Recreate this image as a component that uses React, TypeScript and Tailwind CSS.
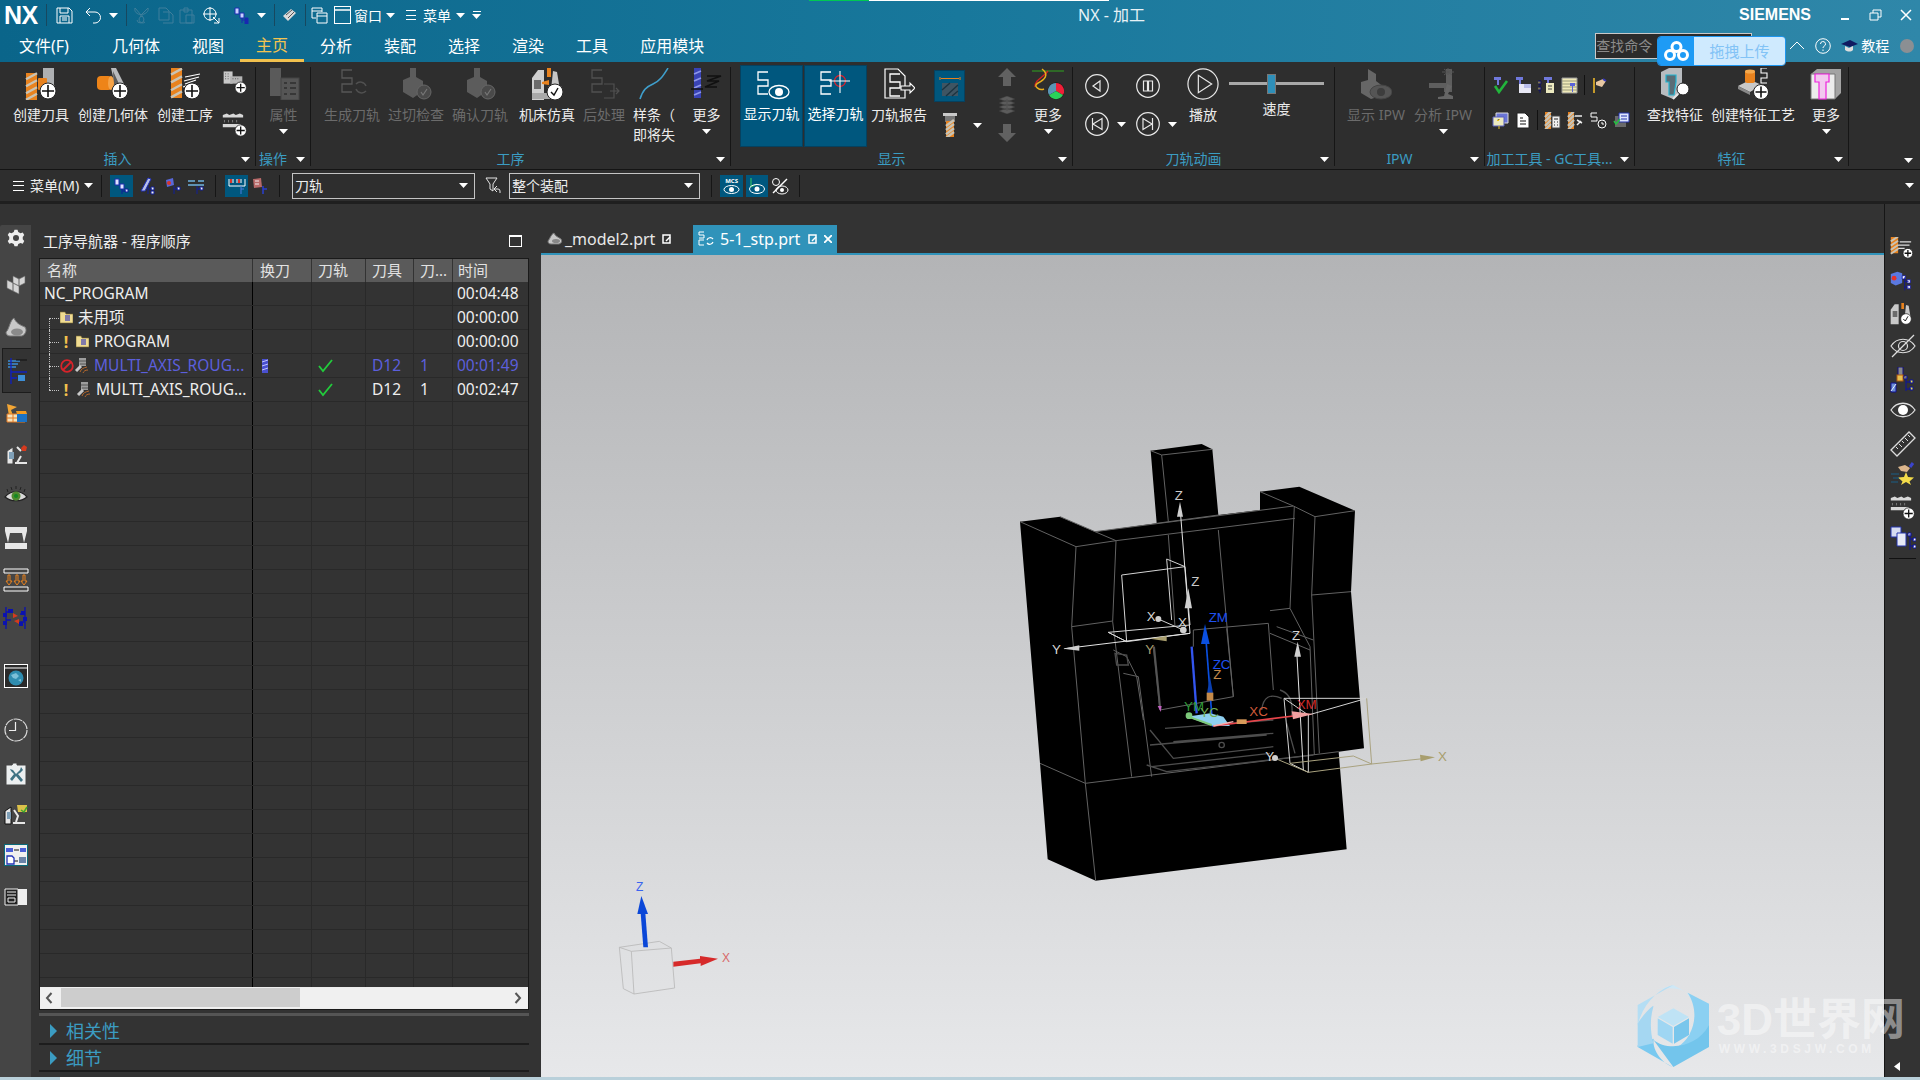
import type { ReactNode } from "react"

type Kids = { children?: ReactNode }

function S({ s = 32, children }: { s?: number } & Kids) {
  return (
    <svg width={s} height={s} viewBox="0 0 32 32" className="block flex-none">
      {children}
    </svg>
  )
}

function Caret({ up = false }: { up?: boolean }) {
  return (
    <svg width="9" height="5" viewBox="0 0 9 5" className={up ? "block flex-none rotate-180" : "block flex-none"}>
      <path d="M0 0h9L4.5 5z" fill="#fff" />
    </svg>
  )
}

function Plus({ x = 23, y = 23, r = 8 }: { x?: number; y?: number; r?: number }) {
  return (
    <g>
      <circle cx={x} cy={y} r={r} fill="#fff" stroke="#222" strokeWidth="1" />
      <path d={`M${x - r + 2} ${y}h${2 * r - 4}M${x} ${y - r + 2}v${2 * r - 4}`} stroke="#111" strokeWidth="1.6" />
    </g>
  )
}

function Bit({ x = 1, y = 5, w = 11, h = 27 }: { x?: number; y?: number; w?: number; h?: number }) {
  const stripes = [0.12, 0.38, 0.64, 0.88]
  return (
    <g>
      <rect x={x} y={y} width={w} height={h} fill="#e8821e" />
      {stripes.map((k) => (
        <path key={k} d={`M${x} ${y + h * k + 3}L${x + w} ${y + h * k - 3}`} stroke="#c9c3b4" strokeWidth="2.4" />
      ))}
    </g>
  )
}

const CreateTool = () => (
  <S>
    <Bit />
    <rect x="18" y="0" width="11" height="20" fill="#aeb0b2" />
    <rect x="13" y="10" width="9" height="12" rx="1" fill="#e8821e" />
    <Plus />
  </S>
)
const CreateGeom = () => (
  <S>
    <path d="M14 0l5 0 9 18-8 8z" fill="#b9babc" />
    <path d="M16 3l7 15-6 4z" fill="#5c5c5c" />
    <rect x="0" y="8" width="15" height="14" rx="4" fill="#ee8418" />
    <ellipse cx="14" cy="15" rx="3" ry="7" fill="#f6a347" />
    <Plus />
  </S>
)
const CreateOp = () => (
  <S>
    <Bit x={2} y={0} w={11} h={30} />
    <path d="M16 9l15-3M15 13l15-4M16 16l11-4M14 19l8-3" stroke="#fff" strokeWidth="1.2" />
    <Plus />
  </S>
)
const SmallDocs = () => (
  <S s={26}>
    <rect x="2" y="3" width="11" height="15" fill="#c9c9c9" />
    <rect x="10" y="9" width="15" height="9" fill="#b5b5b5" />
    <path d="M4 6h1M7 6h1M4 9h1M7 9h1M4 12h1M7 12h1M13 12h1M16 12h1M19 12h1" stroke="#333" strokeWidth="1" />
    <Plus x={23} y={23} r={7} />
  </S>
)
const SmallRule = () => (
  <S s={26}>
    <path d="M1 5l5-2 3 2 5-2 3 2 5-2 4 2v3H1z" fill="#d8d8d8" />
    <path d="M1 16h22v4H1z" fill="#d8d8d8" />
    <path d="M3 11v3M8 11v3M13 11v3M18 11v3" stroke="#888" />
    <Plus x={23} y={24} r={7} />
  </S>
)
const Path = ({ c = "#fff", x = 0, y = 0 }: { c?: string; x?: number; y?: number }) => (
  <path
    d={`M${x + 12} ${y + 1}H${x + 2}V${y + 9}H${x + 12}V${y + 15}H${x + 2}V${y + 23}H${x + 12}`}
    fill="none"
    stroke={c}
    strokeWidth="1.3"
  />
)
const Props = () => (
  <S>
    <rect x="2" y="0" width="11" height="28" fill="#5a5a5a" />
    <rect x="13" y="10" width="18" height="22" fill="#555" stroke="#444" />
    <path d="M16 15h3M22 15h6M16 20h3M22 20h6M16 26h3M22 26h6" stroke="#2e2e2e" strokeWidth="1.4" />
  </S>
)
const GenPath = () => (
  <S>
    <Path c="#575757" x={4} y={1} />
    <path d="M20 16a6 6 0 0 1 10 2M30 23a6 6 0 0 1-10-2" fill="none" stroke="#505050" strokeWidth="1.5" />
  </S>
)
const GougeCheck = () => (
  <S>
    <path d="M3 12l7-3V0h6v9l7 4v10l-10 7-10-6z" fill="#5c5c5c" />
    <circle cx="24" cy="24" r="7" fill="#4a4a4a" stroke="#666" />
    <path d="M21 24l2 3 4-6" fill="none" stroke="#777" strokeWidth="1.2" />
  </S>
)
const Machine = ({ badge = true }: { badge?: boolean }) => (
  <S>
    <path d="M1 10l6-8h6v30H1z" fill="#cfcfcf" />
    <path d="M22 3l4 1 3 18H20z" fill="#c7c7c7" />
    <rect x="3" y="12" width="7" height="9" fill="#6b6b6b" />
    <rect x="16" y="0" width="4" height="9" fill="#e8821e" />
    <path d="M11 14l7-2v5l-7-1z" fill="#e8821e" />
    <rect x="1" y="25" width="20" height="6" fill="#a9a9a9" />
    {badge && (
      <g>
        <circle cx="24" cy="24" r="8" fill="#fff" stroke="#222" />
        <path d="M20 24l3 3 4-7" fill="none" stroke="#111" strokeWidth="1.4" />
      </g>
    )}
  </S>
)
const PostProc = () => (
  <S>
    <Path c="#505050" x={2} y={1} />
    <path d="M16 16h10v14H16M22 23h9M28 20l3 3-3 3" fill="none" stroke="#505050" strokeWidth="1.2" />
  </S>
)
const Spline = () => (
  <S>
    <path d="M2 31c3-9 6-12 13-15S25 8 30 0" fill="none" stroke="#3f9ecb" strokeWidth="1.6" />
  </S>
)
const MoreTool = () => (
  <S>
    <rect x="3" y="0" width="7" height="30" fill="#3943b5" />
    <path d="M3 6l7-3M3 13l7-3M3 20l7-3M3 27l7-3" stroke="#8e97ea" strokeWidth="1.6" />
    <path d="M16 8h14l-14 5h12l-14 6h12M0 21h12" fill="none" stroke="#111" strokeWidth="1.5" />
  </S>
)
const ShowPath = () => (
  <svg width="36" height="32" viewBox="0 0 36 32" className="block flex-none">
    <Path x={2} y={3} />
    <ellipse cx="25" cy="24" rx="10" ry="6.5" fill="none" stroke="#fff" strokeWidth="1.3" />
    <circle cx="25" cy="24" r="4" fill="#fff" />
  </svg>
)
const PickPath = () => (
  <svg width="36" height="32" viewBox="0 0 36 32" className="block flex-none">
    <Path x={1} y={3} />
    <circle cx="22" cy="13" r="5.5" fill="none" stroke="#e0202a" strokeWidth="1.3" />
    <path d="M11 13h21M22 3v22" stroke="#fff" strokeWidth="1.1" />
  </svg>
)
const PathReport = () => (
  <S>
    <path d="M2 1h13l7 7v22H2z" fill="none" stroke="#fff" strokeWidth="1.2" />
    <Path x={5} y={5} />
    <path d="M18 18h9v-3l5 5-5 5v-3h-9z" fill="#2e2e2e" stroke="#fff" strokeWidth="1.1" />
  </S>
)
const ToolSmall = () => (
  <svg width="16" height="24" viewBox="0 0 16 24" className="block">
    <rect x="1" y="0" width="14" height="3" fill="#c9c9c9" />
    <rect x="3" y="3" width="10" height="6" fill="#777" />
    <Bit x={4} y={8} w={8} h={16} />
  </svg>
)
const ClipBox = () => (
  <svg width="24" height="24" viewBox="0 0 24 24" className="block">
    <path d="M2 3v3M22 3v3M3 4.500h18" stroke="#e8821e" strokeWidth="1" />
    <rect x="4" y="9" width="16" height="13" fill="#3f5563" />
    <path d="M4 16l8-7M8 22L20 11M14 22l6-5" stroke="#1d3440" strokeWidth="1.4" />
  </svg>
)
const UpDown = ({ dir }: { dir: "up" | "down" }) => (
  <svg width="18" height="19" viewBox="0 0 18 19" className="block">
    <path d={dir === "up" ? "M9 0l9 9h-5v9H5V9H0z" : "M9 19l9-9h-5V1H5v9H0z"} fill="#616161" />
  </svg>
)
const Layers = () => (
  <svg width="16" height="18" viewBox="0 0 16 18" className="block">
    <path d="M8 0l8 3-8 3-8-3zM8 4l8 3-8 3-8-3zM8 8l8 3-8 3-8-3zM8 12l8 3-8 3-8-3z" fill="#5c5c5c" stroke="#3c3c3c" strokeWidth=".5" />
  </svg>
)
const ColorMore = () => (
  <S>
    <path d="M0 3h32" stroke="#2fa31f" strokeWidth="1" />
    <path d="M3 19c0-8 8-9 13-16" fill="none" stroke="#d32222" strokeWidth="1.3" />
    <path d="M10 1c8 6 2 11-4 14s2 8 6 6" fill="none" stroke="#e8ae1c" strokeWidth="1.5" />
    <circle cx="24" cy="23" r="8.500" fill="#111" />
    <path d="M24 23V15a8 8 0 0 1 7 12z" fill="#ef1f38" />
    <path d="M24 23l7 4a8 8 0 0 1-14 0z" fill="#2ad15a" />
    <path d="M24 23l-7 4a8 8 0 0 1 7-12z" fill="#5a95b5" />
  </S>
)
const Circle = ({ d, size = 24, fill }: { d: string; size?: number; fill?: boolean }) => (
  <svg width={size} height={size} viewBox="0 0 24 24" className="block flex-none">
    <circle cx="12" cy="12" r="11.300" fill="none" stroke="#e8e8e8" strokeWidth={size > 24 ? 0.9 : 1.200} />
    <path d={d} fill={fill ? "#2e2e2e" : "none"} stroke="#e8e8e8" strokeWidth={size > 24 ? 0.9 : 1.200} />
  </svg>
)
const ShowIpw = () => (
  <S>
    <path d="M1 14l7-2V1l8 5v7l8 6v8l-13 4-10-6z" fill="#666" />
    <ellipse cx="21" cy="24" rx="11" ry="7" fill="#555" stroke="#444" />
    <circle cx="21" cy="24" r="4" fill="#3d3d3d" />
  </S>
)
const AnalyzeIpw = () => (
  <S>
    <path d="M2 15h17V1h6v23h-8v-4H2z" fill="#5e5e5e" />
    <path d="M15 4l12 0M21 0v7M17 1l8 6M25 1l-8 6" stroke="#555" />
    <path d="M20 16l5 2-4 8 5 2v3H11v-2l6-1z" fill="#666" />
  </S>
)
const FindFeat = () => (
  <S>
    <path d="M2 4l8-4h13v24l-9 7-12-5z" fill="#b8bcc0" />
    <path d="M7 7h10v7l-2 13h-5V14H7z" fill="#5a6d76" stroke="#22b3d0" strokeWidth="1.2" />
    <circle cx="24" cy="21" r="6" fill="#fff" stroke="#222" />
    <path d="M19 26l-5 5" stroke="#e5e5e5" strokeWidth="2" />
  </S>
)
const CreateFeat = () => (
  <S>
    <path d="M1 18l12-6 12 5-12 7z" fill="#c9c9c9" />
    <path d="M1 18v3l12 6v-3z" fill="#888" />
    <rect x="8" y="2" width="10" height="13" rx="2" fill="#e8821e" />
    <ellipse cx="13" cy="3.500" rx="5" ry="2" fill="#f4a84c" />
    <path d="M30 0h-6v5h6v5h-6v5h6" fill="none" stroke="#fff" strokeWidth="1.1" />
    <Plus x={24} y={24} r={7.500} />
  </S>
)
const MoreFeat = () => (
  <S>
    <path d="M1 6l6-5h24v24l-6 6H1z" fill="#a3a3a3" />
    <path d="M1 6h24v25H1z" fill="#ececec" stroke="#777" />
    <path d="M5 6h14v8h-3v17H9V14H5z" fill="#f2c9ef" stroke="#ee22dd" strokeWidth="1.2" />
  </S>
)
const MiniCheck = () => (
  <svg width="17" height="17" viewBox="0 0 17 17" className="block flex-none">
    <path d="M2 0h7v3H7v5H5V3H2z" fill="#7079dd" />
    <path d="M3 9l4 6 8-11" fill="none" stroke="#22b53c" strokeWidth="2.600" />
  </svg>
)
const MiniDoc = () => (
  <svg width="17" height="17" viewBox="0 0 17 17" className="block flex-none">
    <path d="M1 0h7v3H6v5H4V3H1z" fill="#7079dd" />
    <path d="M4 7h12v9H4z" fill="#e8e8f4" />
    <path d="M9 7h7v4H9z" fill="#b9bdea" />
  </svg>
)
const MiniTree = () => (
  <svg width="17" height="17" viewBox="0 0 17 17" className="block flex-none">
    <path d="M6 0h8v3h-3v5H9V3H6z" fill="#7079dd" />
    <path d="M8 6h8v10H8z" fill="#eceac0" />
    <path d="M10 9h4M10 12h4" stroke="#444" />
    <path d="M2 3v13M0 4h3v3H0zM0 10h3v3H0z" fill="#e8d84a" stroke="#101060" />
  </svg>
)
const MiniNote = () => (
  <svg width="17" height="17" viewBox="0 0 17 17" className="block flex-none">
    <path d="M1 1h15v15H1z" fill="#efe9b8" stroke="#999" />
    <path d="M1 4h15M1 7h15M1 10h15M1 13h15" stroke="#9a9a7a" />
    <path d="M9 6h5v3h-2v6h-1V9H9z" fill="#5a63d8" />
  </svg>
)
const Doc = () => (
  <svg width="16" height="17" viewBox="0 0 16 17" className="block flex-none">
    <path d="M2 1h8l4 4v11H2z" fill="#fff" stroke="#222" />
    <path d="M5 6h3M5 9h6M5 12h6" stroke="#111" />
  </svg>
)

function RibbonBtn({
  w,
  label,
  second,
  icon,
  dim = false,
  caret = false,
}: {
  w: string
  label: string
  second?: string
  icon: ReactNode
  dim?: boolean
  caret?: boolean
}) {
  return (
    <div className={`${w} flex flex-none flex-col items-center pt-[1px]`}>
      <div className="flex h-[32px] items-center justify-center">{icon}</div>
      <div className={`mt-[5px] whitespace-nowrap text-[14px] leading-[20px] ${dim ? "text-[#6b6b6b]" : "text-[#ececec]"}`}>
        {label}
      </div>
      {second && <div className="whitespace-nowrap text-[14px] leading-[20px] text-[#ececec]">{second}</div>}
      {caret && (
        <div className="mt-[4px]">
          <Caret />
        </div>
      )}
    </div>
  )
}

function Group({ w, label, children, last = false }: { w: string; label: string; last?: boolean } & Kids) {
  return (
    <div className={`${w} flex h-[99px] flex-none flex-col ${last ? "" : "border-r border-[#161616]"}`}>
      <div className="flex h-[81px] items-start">{children}</div>
      <div className="flex h-[18px] items-center pt-[4px]">
        <span className="min-w-0 flex-1 overflow-visible whitespace-nowrap text-center text-[14px] leading-[14px] text-[#3b9cc2]">
          {label}
        </span>
        <span className="flex w-[20px] flex-none justify-center">
          <Caret />
        </span>
      </div>
    </div>
  )
}

function Sep({ className = "" }: { className?: string }) {
  return <div className={`h-[22px] w-px flex-none bg-[#17485f] ${className}`} />
}

function QuickAccess() {
  return (
    <div className="flex h-[30px] w-[1078px] flex-none items-center text-white">
      <span className="ml-[4px] w-[37px] font-['Liberation_Sans',sans-serif] text-[25px] leading-none font-bold tracking-[-0.5px]">NX</span>
      <Sep className="ml-[5px]" />
      <svg width="17" height="17" viewBox="0 0 17 17" className="ml-[9px] flex-none">
        <path d="M1 1h12l3 3v12H1zM4 1v5h8V1M4 16v-7h9v7M6 11h5M6 13h5" fill="none" stroke="#fff" />
      </svg>
      <svg width="17" height="17" viewBox="0 0 17 17" className="ml-[12px] flex-none">
        <path d="M5 1L1 5l4 4M1 5h9a5 5 0 0 1 0 11H8" fill="none" stroke="#fff" />
      </svg>
      <span className="ml-[7px]">
        <Caret />
      </span>
      <Sep className="ml-[8px]" />
      <svg width="17" height="17" viewBox="0 0 17 17" className="ml-[6px] flex-none">
        <path d="M8 8L2 1c-1 4 2 6 6 7zM8 8l7-7c1 4-3 6-7 7zM7 9a3.500 3.500 0 1 1-3 4M10 9a3.500 3.500 0 1 0 2 6" fill="none" stroke="#3f7f9c" />
      </svg>
      <svg width="17" height="17" viewBox="0 0 17 17" className="ml-[7px] flex-none">
        <path d="M2 1h7l3 3v9H2zM6 5h7l3 3v8H6" fill="none" stroke="#3f7f9c" />
      </svg>
      <svg width="17" height="17" viewBox="0 0 17 17" className="ml-[5px] flex-none">
        <path d="M1 3h12v13H1zM5 1h4v4H5zM7 8h8v8H7z" fill="none" stroke="#3f7f9c" />
      </svg>
      <svg width="17" height="17" viewBox="0 0 17 17" className="ml-[7px] flex-none">
        <circle cx="7" cy="7" r="6" fill="none" stroke="#fff" />
        <path d="M0 7h14M7 0v14M10 10l6 6M16 11v5h-5" fill="none" stroke="#fff" />
      </svg>
      <svg width="16" height="17" viewBox="0 0 16 17" className="ml-[14px] flex-none">
        <path d="M1 1h4v6H1zM6 6h4v5H6z" fill="#c9d0ff" stroke="#1a2db0" />
        <path d="M8 11v5M8 13h4M11 11h3v3h-3zM11 14h3v3h-3z" fill="#1828b0" stroke="#1828b0" />
      </svg>
      <span className="ml-[7px]">
        <Caret />
      </span>
      <Sep className="ml-[8px]" />
      <svg width="16" height="16" viewBox="0 0 16 16" className="ml-[7px] flex-none">
        <path d="M1 9l8-7 5 4-8 8z" fill="#dadada" />
        <path d="M4 8l6-5M6 11l6-6" stroke="#555" />
      </svg>
      <Sep className="ml-[7px]" />
      <svg width="17" height="17" viewBox="0 0 17 17" className="ml-[5px] flex-none">
        <path d="M1 1h10v4M1 1v10h4M1 4h10M6 6h10v10H6zM6 9h10" fill="none" stroke="#fff" />
      </svg>
      <svg width="17" height="18" viewBox="0 0 17 18" className="ml-[6px] flex-none">
        <rect x=".5" y=".5" width="16" height="17" fill="none" stroke="#fff" />
        <path d="M1 4h15" stroke="#fff" strokeWidth="1.500" />
      </svg>
      <span className="ml-[3px] text-[14px]">窗口</span>
      <span className="ml-[4px]">
        <Caret />
      </span>
      <span className="ml-[11px] flex h-[10px] w-[10px] flex-col justify-between">
        <i className="block h-px bg-white" />
        <i className="block h-px bg-white" />
        <i className="block h-px bg-white" />
      </span>
      <span className="ml-[7px] text-[14px]">菜单</span>
      <span className="ml-[5px]">
        <Caret />
      </span>
      <span className="ml-[7px] flex flex-col items-center gap-[2px]">
        <i className="block h-px w-[8px] bg-white" />
        <Caret />
      </span>
    </div>
  )
}

function TitleBar() {
  const tabs = ["几何体", "视图", "主页", "分析", "装配", "选择", "渲染", "工具", "应用模块"]
  return (
    <header className="relative h-[62px] flex-none bg-gradient-to-r from-[#0a658a] via-[#18789c] to-[#2f87a9] text-white">
      <div className="flex h-[30px] items-center">
        <QuickAccess />
        <span className="text-[16px] text-[#e8f2f6]">NX - 加工</span>
        <span className="ml-[594px] font-['Liberation_Sans',sans-serif] text-[16px] font-bold">SIEMENS</span>
        <i className="mt-[8px] ml-[30px] block h-[2px] w-[8px] bg-white" />
        <svg width="13" height="12" viewBox="0 0 13 12" className="ml-[20px]">
          <path d="M1 4h8v7H1zM4 4V1h8v7H9" fill="none" stroke="#fff" />
        </svg>
        <svg width="12" height="12" viewBox="0 0 12 12" className="ml-[18px]">
          <path d="M1 1l10 10M11 1L1 11" stroke="#fff" strokeWidth="1.500" />
        </svg>
      </div>
      <div className="flex h-[32px] items-center pb-[1px] text-[16px] leading-none">
        <span className="ml-[19px] w-[77px]">文件(F)</span>
        {tabs.map((t) => (
          <span
            key={t}
            className={
              t === "主页"
                ? "-mb-[1px] flex h-[32px] items-center border-b-[3px] border-[#f2c14e] px-[16px] pt-[1px] text-[#f3c451]"
                : "px-[16px]"
            }
          >
            {t}
          </span>
        ))}
        <div className="ml-[875px] flex h-[26px] w-[157px] flex-none items-center border border-[#c9c9c9] bg-[#2b2b2b] text-[14px] text-[#8a8a8a]">
          查找命令
        </div>
        <svg width="16" height="9" viewBox="0 0 16 9" className="ml-[37px] flex-none">
          <path d="M1 8l7-7 7 7" fill="none" stroke="#fff" />
        </svg>
        <svg width="16" height="16" viewBox="0 0 16 16" className="ml-[10px] flex-none">
          <circle cx="8" cy="8" r="7.300" fill="none" stroke="#fff" />
          <path d="M5.500 6a2.500 2.500 0 1 1 3.500 2.300c-.7.400-1 .8-1 1.700M8 11.500v1.500" fill="none" stroke="#fff" />
        </svg>
        <svg width="17" height="12" viewBox="0 0 17 12" className="ml-[10px] flex-none">
          <path d="M0 4l9-4 8 4-8 3z" fill="#101a60" />
          <path d="M4 6v4c3 2 6 2 8 0V6l-4 2z" fill="#ddd" />
        </svg>
        <span className="ml-[3px] text-[14px]">教程</span>
        <i className="ml-[11px] block h-[14px] w-[14px] rounded-full bg-[#8b8f93]" />
      </div>
      {/* baidu upload float, sits on top of the search box */}
      <div className="absolute top-[36px] left-[1657px] z-10 flex h-[30px] w-[129px] overflow-hidden rounded-[4px] border border-[#1e96ef]">
        <div className="flex w-[36px] items-center justify-center bg-[#1e9bf5]">
          <svg width="25" height="20" viewBox="0 0 25 20">
            <g fill="none" stroke="#fff" strokeWidth="3">
              <circle cx="12.500" cy="6" r="4.500" />
              <circle cx="6" cy="14" r="4.500" />
              <circle cx="19" cy="14" r="4.500" />
            </g>
          </svg>
        </div>
        <div className="flex flex-1 items-center justify-center bg-[#cfeafe] text-[15px] text-[#82c3f6]">拖拽上传</div>
      </div>
    </header>
  )
}

function Ribbon() {
  return (
    <section className="flex h-[107px] flex-none items-start bg-[#2e2e2e] pt-[5px]">
      <Group w="w-[256px]" label="插入">
        <div className="w-[5px] flex-none" />
        <RibbonBtn w="w-[72px]" label="创建刀具" icon={<CreateTool />} />
        <RibbonBtn w="w-[72px]" label="创建几何体" icon={<CreateGeom />} />
        <RibbonBtn w="w-[72px]" label="创建工序" icon={<CreateOp />} />
        <div className="flex w-[28px] flex-none flex-col items-center gap-[16px] pt-[2px]">
          <SmallDocs />
          <SmallRule />
        </div>
      </Group>
      <Group w="w-[55px]" label="操作">
        <RibbonBtn w="w-[55px]" label="属性" dim caret icon={<Props />} />
      </Group>
      <Group w="w-[420px]" label="工序">
        <div className="w-[9px] flex-none" />
        <RibbonBtn w="w-[64px]" label="生成刀轨" dim icon={<GenPath />} />
        <RibbonBtn w="w-[64px]" label="过切检查" dim icon={<GougeCheck />} />
        <RibbonBtn w="w-[64px]" label="确认刀轨" dim icon={<GougeCheck />} />
        <RibbonBtn w="w-[70px]" label="机床仿真" icon={<Machine />} />
        <RibbonBtn w="w-[44px]" label="后处理" dim icon={<PostProc />} />
        <RibbonBtn w="w-[56px]" label="样条（" second="即将失" icon={<Spline />} />
        <RibbonBtn w="w-[49px]" label="更多" caret icon={<MoreTool />} />
      </Group>
      <Group w="w-[342px]" label="显示">
        <div className="w-[9px] flex-none" />
        <div className="-mt-[2px] flex h-[82px] w-[63px] flex-none flex-col items-center border border-[#06415f] bg-[#00577e] pt-[2px]">
          <ShowPath />
          <span className="mt-[4px] text-[14px] leading-[20px] whitespace-nowrap text-white">显示刀轨</span>
        </div>
        <div className="-mt-[2px] ml-px flex h-[82px] w-[63px] flex-none flex-col items-center border border-[#06415f] bg-[#00577e] pt-[2px]">
          <PickPath />
          <span className="mt-[4px] text-[14px] leading-[20px] whitespace-nowrap text-white">选择刀轨</span>
        </div>
        <RibbonBtn w="w-[64px]" label="刀轨报告" icon={<PathReport />} />
        <div className="ml-[3px] w-[55px] flex-none pt-[3px]">
          <div className="flex h-[32px] w-[31px] items-center justify-center border border-[#06415f] bg-[#00577e]">
            <ClipBox />
          </div>
          <div className="mt-[11px] flex items-center">
            <span className="flex w-[31px] justify-center">
              <ToolSmall />
            </span>
            <span className="ml-[8px]">
              <Caret />
            </span>
          </div>
        </div>
        <div className="flex w-[36px] flex-none flex-col items-center gap-[9px] pt-[1px]">
          <UpDown dir="up" />
          <Layers />
          <UpDown dir="down" />
        </div>
        <RibbonBtn w="w-[46px]" label="更多" caret icon={<ColorMore />} />
      </Group>
      <Group w="w-[262px]" label="刀轨动画">
        <div className="w-[12px] flex-none" />
        <div className="grid flex-none grid-cols-[51px_51px] gap-y-[14px] pt-[7px]">
          <Circle d="M15 7v10l-7-5z" />
          <Circle d="M7.500 7h4v10h-4zM12.500 7h4v10h-4z" />
          <div className="flex items-center">
            <Circle d="M7.500 6v12M17 6.500v11L8 12z" />
            <span className="ml-[8px]">
              <Caret />
            </span>
          </div>
          <div className="flex items-center">
            <Circle d="M16.500 6v12M7 6.500v11l9-5.500z" />
            <span className="ml-[8px]">
              <Caret />
            </span>
          </div>
        </div>
        <RibbonBtn w="w-[32px]" label="播放" icon={<Circle size={32} d="M8.500 5.500v13l10-6.500z" />} />
        <div className="ml-[10px] flex w-[95px] flex-none flex-col items-center pt-[7px]">
          <div className="relative h-[20px] w-full">
            <div className="absolute top-[8px] h-[3px] w-full bg-[#a8a8a8]" />
            <div className="absolute top-0 left-[38px] h-[20px] w-[9px] border border-[#777] bg-[#2e8fb9]" />
          </div>
          <span className="mt-[5px] text-[14px] leading-[20px] text-[#ececec]">速度</span>
        </div>
      </Group>
      <Group w="w-[150px]" label="IPW">
        <div className="w-[8px] flex-none" />
        <RibbonBtn w="w-[66px]" label="显示 IPW" dim icon={<ShowIpw />} />
        <RibbonBtn w="w-[68px]" label="分析 IPW" dim caret icon={<AnalyzeIpw />} />
      </Group>
      <Group w="w-[150px]" label="加工工具 - GC工具...">
        <div className="flex flex-col gap-[15px] pt-[8px] pl-[7px]">
          <div className="flex items-center gap-[6px]">
            <MiniCheck />
            <MiniDoc />
            <MiniTree />
            <MiniNote />
            <div className="h-[20px] w-px bg-[#111]" />
            <svg width="17" height="17" viewBox="0 0 17 17" className="block">
              <path d="M3 1v15" stroke="#c59a2a" strokeWidth="2" />
              <path d="M5 5l7-3 3 2-4 6-6-2z" fill="#e8c7a2" />
              <path d="M12 2l3 2" stroke="#3438b8" strokeWidth="2" />
            </svg>
          </div>
          <div className="flex items-center gap-[6px]">
            <svg width="17" height="17" viewBox="0 0 17 17" className="block">
              <path d="M4 1h12v10H4z" fill="#6a75d6" stroke="#ddd" />
              <path d="M1 5h11v9H1z" fill="#eceac0" stroke="#5860c0" />
              <path d="M5 8l1 1 2-2M7 14v3" stroke="#e8c020" />
            </svg>
            <Doc />
            <div className="h-[20px] w-px bg-[#111]" />
            <svg width="17" height="17" viewBox="0 0 17 17" className="block">
              <Bit x={1} y={0} w={6} h={17} />
              <rect x="8" y="4" width="8" height="12" fill="#eee" stroke="#444" />
              <path d="M10 7h4M10 10h1M13 10h1M10 13h1M13 13h1" stroke="#222" />
            </svg>
            <svg width="17" height="17" viewBox="0 0 17 17" className="block">
              <Bit x={1} y={0} w={6} h={17} />
              <path d="M8 4h7M10 8l5 3M10 13l4-4" stroke="#eee" strokeWidth="1.500" />
            </svg>
            <svg width="17" height="17" viewBox="0 0 17 17" className="block">
              <path d="M7 1H1v4h6v4H1" fill="none" stroke="#fff" />
              <circle cx="12" cy="12" r="4" fill="none" stroke="#fff" />
              <path d="M12 10v2h2" stroke="#fff" fill="none" />
            </svg>
            <svg width="17" height="17" viewBox="0 0 17 17" className="block">
              <path d="M2 4h11v11H2z" fill="#696969" />
              <path d="M6 1h10v9H6z" fill="#dfe6ff" stroke="#2233aa" />
              <path d="M8 4h6M8 7h6" stroke="#2233aa" />
              <path d="M1 9l2 3 4-5" stroke="#22c040" strokeWidth="1.500" fill="none" />
            </svg>
          </div>
        </div>
      </Group>
      <Group w="w-[214px]" label="特征">
        <div className="w-[5px] flex-none" />
        <RibbonBtn w="w-[70px]" label="查找特征" icon={<FindFeat />} />
        <RibbonBtn w="w-[86px]" label="创建特征工艺" icon={<CreateFeat />} />
        <div className="w-[4px] flex-none" />
        <RibbonBtn w="w-[52px]" label="更多" caret icon={<MoreFeat />} />
      </Group>
      <div className="flex h-[99px] flex-1 items-end justify-end pr-[7px] pb-[3px]">
        <Caret />
      </div>
    </section>
  )
}

function SelBox({ w, text }: { w: string; text: string }) {
  return (
    <div className={`${w} flex h-[26px] flex-none items-center justify-between border border-[#c4c4c4] pr-[6px] pl-[2px] text-[14px] text-[#eee]`}>
      {text}
      <Caret />
    </div>
  )
}

function Toolbar() {
  return (
    <div className="flex h-[31px] flex-none items-center bg-[#2e2e2e] text-[#eee]">
      <span className="ml-[13px] flex h-[10px] w-[11px] flex-col justify-between">
        <i className="block h-px bg-white" />
        <i className="block h-px bg-white" />
        <i className="block h-px bg-white" />
      </span>
      <span className="ml-[6px] text-[14px]">菜单(M)</span>
      <span className="ml-[5px]">
        <Caret />
      </span>
      <div className="ml-[8px] h-[22px] w-px bg-[#161616]" />
      <div className="ml-[8px] flex h-[22px] w-[23px] items-center justify-center bg-[#00577e]">
        <svg width="16" height="16" viewBox="0 0 16 16">
          <path d="M1 1h4v6H1zM6 6h4v5H6z" fill="#dfe3ff" stroke="#1a2db0" />
          <path d="M8 11v5M8 13h4M11 11h3v3h-3z" fill="#dfe3ff" stroke="#101f99" />
        </svg>
      </div>
      <svg width="16" height="18" viewBox="0 0 16 18" className="ml-[6px]">
        <path d="M2 14L9 1l3 1-6 12z" fill="#b6bee8" stroke="#1f2fb8" />
        <path d="M9 9v8M9 12h4M12 10h3v3h-3zM12 14h3v3h-3z" fill="#f0f0f0" stroke="#101f99" />
      </svg>
      <svg width="16" height="18" viewBox="0 0 16 18" className="ml-[10px]">
        <path d="M1 3l7-2 1 7-7 2z" fill="#5968d8" />
        <circle cx="4" cy="6" r="2" fill="#d8352a" />
        <path d="M9 9v8M9 12h4M12 10h3v3h-3z" fill="#f0f0f0" stroke="#101f99" />
      </svg>
      <svg width="16" height="18" viewBox="0 0 16 18" className="ml-[7px]">
        <path d="M0 4h7M10 4h6M0 8h16" stroke="#6fb2e0" strokeWidth="1.500" />
        <path d="M9 9v8M9 12h4M12 10h3v3h-3z" fill="#f0f0f0" stroke="#101f99" />
      </svg>
      <div className="ml-[11px] h-[22px] w-px bg-[#161616]" />
      <div className="ml-[9px] flex h-[22px] w-[23px] items-center justify-center bg-[#00577e]">
        <svg width="18" height="18" viewBox="0 0 18 18">
          <path d="M1 2v7h16V2M5 2v4M9 2v4M13 2v4" fill="none" stroke="#fff" />
          <path d="M2 2h2v4H2zM10 2h2v4h-2z" fill="#d8352a" />
          <path d="M13 9v8M13 12h3" stroke="#4a7fe0" />
        </svg>
      </div>
      <svg width="17" height="18" viewBox="0 0 17 18" className="ml-[4px]">
        <path d="M1 2l8-1 1 9-8 1z" fill="#b86a6a" />
        <path d="M3 4h4M3 7h4" stroke="#eee" />
        <path d="M11 9v8M11 12h4" stroke="#2a3fd0" strokeWidth="1.500" />
      </svg>
      <div className="ml-[10px] h-[22px] w-px bg-[#161616]" />
      <div className="ml-[12px]">
        <SelBox w="w-[183px]" text="刀轨" />
      </div>
      <svg width="16" height="17" viewBox="0 0 16 17" className="ml-[10px]">
        <path d="M1 1h11L8 7v7L5 12V7zM12 9l-3 3 3 3M9 12h4a2 2 0 0 1 2 2v2" fill="none" stroke="#e4e4e4" />
      </svg>
      <div className="ml-[8px]">
        <SelBox w="w-[191px]" text="整个装配" />
      </div>
      <div className="ml-[11px] h-[22px] w-px bg-[#161616]" />
      <div className="ml-[8px] flex h-[22px] w-[23px] flex-col items-center justify-center bg-[#00577e] text-[6px] leading-[7px] font-bold text-white">
        MCS
        <svg width="17" height="9" viewBox="0 0 17 9">
          <ellipse cx="8.500" cy="4.500" rx="7.500" ry="4" fill="none" stroke="#fff" />
          <circle cx="8.500" cy="4.500" r="2.500" fill="#fff" />
        </svg>
      </div>
      <div className="ml-[3px] flex h-[22px] w-[22px] items-center justify-center bg-[#00577e]">
        <svg width="18" height="18" viewBox="0 0 18 18">
          <path d="M3 1v9l6-3" fill="none" stroke="#3ad060" />
          <ellipse cx="9" cy="12" rx="7.500" ry="4.500" fill="none" stroke="#fff" />
          <circle cx="9" cy="12" r="2.500" fill="#fff" />
        </svg>
      </div>
      <svg width="18" height="18" viewBox="0 0 18 18" className="ml-[3px]">
        <path d="M2 16L16 2" stroke="#fff" strokeWidth="1.500" />
        <circle cx="5" cy="5" r="3.500" fill="none" stroke="#fff" />
        <ellipse cx="11" cy="13" rx="6" ry="4" fill="none" stroke="#fff" />
        <circle cx="11" cy="13" r="2" fill="#fff" />
      </svg>
      <div className="ml-[10px] h-[22px] w-px bg-[#161616]" />
      <div className="ml-auto pr-[6px]">
        <Caret />
      </div>
    </div>
  )
}

const railIcons: { mt: string; node: ReactNode }[] = [
  {
    mt: "mt-[26px]",
    node: (
      <svg width="24" height="24" viewBox="0 0 24 24">
        <path d="M3 7l6 3v8l-6-3zM9 3l6 3v7l-6-3zM15 6l6-3v7l-6 3zM9 10l6 3v8l-6-3z" fill="#d5d5d5" stroke="#666" strokeWidth=".6" />
      </svg>
    ),
  },
  {
    mt: "mt-[19px]",
    node: (
      <svg width="24" height="24" viewBox="0 0 24 24">
        <path d="M2 16c3-2 4-12 8-14 2 5 6 7 11 9 2 3 1 7-3 9H6c-3 0-4-2-4-4z" fill="#c8c8c8" stroke="#777" />
        <ellipse cx="13" cy="16" rx="6" ry="3.500" fill="#8a8a8a" />
      </svg>
    ),
  },
]

const rail2: { mt: string; node: ReactNode }[] = [
  {
    mt: "mt-[8px]",
    node: (
      <svg width="24" height="24" viewBox="0 0 24 24">
        <path d="M3 3l10 3-6 3 4 11-5 1z" fill="#f3a635" />
        <path d="M3 13h18v8H3zM3 17h18M9 13v8M15 13v8" fill="#f3e2bd" stroke="#e47b24" />
        <path d="M13 12h10v9H13z" fill="#1b72c4" />
        <path d="M12 10h10l1 3H13z" fill="#f29a1e" />
      </svg>
    ),
  },
  {
    mt: "mt-[18px]",
    node: (
      <svg width="24" height="24" viewBox="0 0 24 24">
        <path d="M3 8l6-4v17H3z" fill="#e7e7e7" stroke="#444" />
        <rect x="5" y="9" width="5" height="7" fill="#7fa0b8" />
        <path d="M13 4l4 4M11 20h12M17 13l-4 7" stroke="#e7e7e7" strokeWidth="2" />
        <path d="M17 5l3-3 3 2-1 4h-4z" fill="#d63a1e" />
      </svg>
    ),
  },
  {
    mt: "mt-[16px]",
    node: (
      <svg width="24" height="20" viewBox="0 0 24 20">
        <path d="M1 12c6-7 16-7 22 0-6 5-16 5-22 0z" fill="#d8d8d8" stroke="#222" strokeWidth="1.200" />
        <circle cx="12" cy="11" r="4.500" fill="#4e8a2e" />
        <circle cx="12" cy="11" r="2" fill="#182" />
        <path d="M4 7L3 4M8 5L7 2M12 4V1M16 5l1-3M20 7l1-3" stroke="#222" />
      </svg>
    ),
  },
  {
    mt: "mt-[19px]",
    node: (
      <svg width="24" height="24" viewBox="0 0 24 24">
        <path d="M1 1h22v4l-3 12h3v6H1v-6h3L1 5z" fill="#e7e7e7" />
        <path d="M6 7h12l2 10H4z" fill="#4b4b4b" />
      </svg>
    ),
  },
  {
    mt: "mt-[18px]",
    node: (
      <svg width="26" height="24" viewBox="0 0 26 24">
        <path d="M1 1h24v4H1zM1 19h24v4H1z" fill="#444" stroke="#fff" />
        <path d="M5 7v6H3l3 4 3-4H7V7zM13 7v6h-2l3 4 3-4h-2V7zM20 7v6h-2l3 4 3-4h-2V7z" fill="none" stroke="#e8821e" />
      </svg>
    ),
  },
  {
    mt: "mt-[14px]",
    node: (
      <svg width="26" height="24" viewBox="0 0 26 24">
        <path d="M3 1v22M3 6h5M3 14h5M22 1v22M22 8h-5M22 16h-5" stroke="#0b12b0" strokeWidth="1.300" />
        <path d="M5 3h5v4H5zM0 7h4v4H0zM0 15h4v4H0zM18 5h4v4h-4zM20 11h4v4h-4zM16 16h4v4h-4z" fill="#0b12b0" />
        <path d="M10 7l5 3-5 2zM16 13l-5 2 5 3z" fill="#d63a1e" />
      </svg>
    ),
  },
  {
    mt: "mt-[34px]",
    node: (
      <svg width="24" height="24" viewBox="0 0 24 24">
        <rect x=".5" y=".5" width="23" height="23" fill="#2a2a2a" stroke="#fff" />
        <path d="M1 4h22" stroke="#fff" />
        <circle cx="12" cy="14" r="7.500" fill="#2f8db0" />
        <path d="M7 11l5-2 3 3-3 3-3-1zM14 16l3-1 0 3z" fill="#7cc0d8" />
      </svg>
    ),
  },
  {
    mt: "mt-[30px]",
    node: (
      <svg width="24" height="24" viewBox="0 0 24 24">
        <circle cx="12" cy="12" r="11" fill="none" stroke="#dcdcdc" strokeWidth="1.200" strokeDasharray="9 .8" />
        <path d="M11.500 4v8.500H5" fill="none" stroke="#eee" strokeWidth="1.200" />
      </svg>
    ),
  },
  {
    mt: "mt-[20px]",
    node: (
      <svg width="24" height="24" viewBox="0 0 24 24">
        <path d="M2 3h6l1-2h4v2h9v20H2z" fill="#eceff0" stroke="#444" />
        <path d="M6 7l3 1 3 4 4-4 1-3 2 3-3 3-2 1 5 6-2 2-5-6-4 5-2-2 4-5-3-3z" fill="#3e7283" />
      </svg>
    ),
  },
  {
    mt: "mt-[16px]",
    node: (
      <svg width="24" height="24" viewBox="0 0 24 24">
        <path d="M1 9l6-4v17H1z" fill="#e7e7e7" stroke="#111" />
        <rect x="3" y="10" width="4" height="7" fill="#7fa0b8" />
        <path d="M10 8l4 6-2 6M9 21h12" stroke="#e7e7e7" strokeWidth="2" fill="none" />
        <path d="M13 3h10v7H14z" fill="#dcc14a" />
        <path d="M17 8l3 2 3-5" stroke="#3ea82e" strokeWidth="1.500" fill="none" />
      </svg>
    ),
  },
  {
    mt: "mt-[18px]",
    node: (
      <svg width="24" height="24" viewBox="0 0 24 24">
        <rect x=".5" y=".5" width="23" height="21" fill="#f0f0f0" stroke="#0a6a7a" />
        <path d="M2 4h7v4H2zM16 4h6v4h-6z" fill="#4a5fd8" />
        <path d="M10 6h5M10 17h4" stroke="#111" strokeWidth="1.200" />
        <path d="M3 12h5l2 2v6H3z" fill="#fff" stroke="#2233b8" strokeWidth="1.300" />
        <rect x="15" y="13" width="7" height="6" fill="#6a83a8" />
      </svg>
    ),
  },
  {
    mt: "mt-[18px]",
    node: (
      <svg width="24" height="24" viewBox="0 0 24 24">
        <rect x="1" y="3" width="22" height="16" fill="#eee" />
        <path d="M1 3h13v16H1zM3 6h9M3 9h9M4 12h7v4H4z" fill="#222" stroke="#eee" />
      </svg>
    ),
  },
]

function LeftRail() {
  return (
    <aside className="flex w-[38px] flex-none flex-col">
      <div className="h-[21px] flex-none" />
      <div className="flex w-[31px] flex-1 flex-col items-center rounded-tl-[2px] bg-[#454545]">
        <svg width="18" height="18" viewBox="0 0 24 24" className="mt-[4px] flex-none">
          <path
            d="M10 1h4l1 3 3 1.500 3-1 2 3.500-2 2.500v3l2 2.500-2 3.500-3-1L15 20l-1 3h-4l-1-3-3-1.500-3 1-2-3.500 2-2.500v-3L1 8l2-3.500 3 1L9 4z"
            fill="#eee"
          />
          <circle cx="12" cy="12" r="4" fill="#444" />
        </svg>
        {railIcons.map((r, i) => (
          <div key={i} className={`${r.mt} flex h-[24px] flex-none items-center justify-center`}>
            {r.node}
          </div>
        ))}
        <div className="mt-[8px] ml-[2px] flex h-[45px] w-[29px] flex-none items-center justify-center border-y border-l border-[#1c1c1c] bg-[#333]">
          <svg width="22" height="26" viewBox="0 0 22 26">
            <path d="M2 3h12M2 6h10M2 9h8" stroke="#3d8fd8" strokeWidth="1.500" />
            <path d="M5 0v26M5 14h16M5 20h6" stroke="#1020c0" strokeWidth="1.300" />
            <path d="M10 2h11" stroke="#111" />
            <path d="M12 17h7v6h-7z" fill="#3d8fd8" />
          </svg>
        </div>
        {rail2.map((r, i) => (
          <div key={i} className={`${r.mt} flex h-[24px] flex-none items-center justify-center`}>
            {r.node}
          </div>
        ))}
      </div>
    </aside>
  )
}

type Row = {
  name: string
  icon?: ReactNode
  tree?: "first" | "mid" | "last"
  swap?: boolean
  ok?: boolean
  tool?: string
  num?: string
  time?: string
  blue?: boolean
}

const Folder = () => (
  <svg width="13" height="13" viewBox="0 0 13 13" className="flex-none">
    <path d="M0 1h5l1 2h7v9H0z" fill="#f0dc92" stroke="#7a6a30" strokeWidth=".6" />
    <path d="M5 5h5M5 7h5M5 9h5" stroke="#1018c0" strokeWidth="1" />
  </svg>
)
const Warn = () => <span className="w-[12px] flex-none text-center text-[16px] leading-none font-bold text-[#f2c14e]">!</span>
const OpIcon = () => (
  <svg width="15" height="15" viewBox="0 0 15 15" className="flex-none">
    <rect x="5" y="0" width="7" height="8" fill="#9d9d9d" />
    <path d="M5 3h7M6 6h6" stroke="#555" />
    <path d="M7 8L2 13" stroke="#c9c9c9" strokeWidth="3" />
    <path d="M6 14c1-3 3-4 7-5M9 15c1-2 2-3 5-3" stroke="#b7682c" fill="none" />
  </svg>
)
const Stop = () => (
  <svg width="14" height="14" viewBox="0 0 14 14" className="flex-none">
    <circle cx="7" cy="7" r="5.800" fill="none" stroke="#d8232a" strokeWidth="1.800" />
    <path d="M3 11l8-8" stroke="#d8232a" strokeWidth="1.800" />
  </svg>
)
const Check = () => (
  <svg width="15" height="14" viewBox="0 0 15 14">
    <path d="M1 7l4 5L14 1" fill="none" stroke="#22cc3c" strokeWidth="1.800" />
  </svg>
)

const rows: Row[] = [
  { name: "NC_PROGRAM", time: "00:04:48" },
  { name: "未用项", tree: "first", icon: <Folder />, time: "00:00:00" },
  {
    name: "PROGRAM",
    tree: "mid",
    icon: (
      <>
        <Warn />
        <span className="ml-[4px]">
          <Folder />
        </span>
      </>
    ),
    time: "00:00:00",
  },
  {
    name: "MULTI_AXIS_ROUG...",
    tree: "mid",
    icon: (
      <>
        <Stop />
        <OpIcon />
      </>
    ),
    swap: true,
    ok: true,
    tool: "D12",
    num: "1",
    time: "00:01:49",
    blue: true,
  },
  {
    name: "MULTI_AXIS_ROUG...",
    tree: "last",
    icon: (
      <>
        <Warn />
        <span className="ml-[4px]">
          <OpIcon />
        </span>
      </>
    ),
    ok: true,
    tool: "D12",
    num: "1",
    time: "00:02:47",
  },
]

function TreeLines({ tree }: { tree: "first" | "mid" | "last" }) {
  const vert = { first: "top-[12px] bottom-[-1px]", mid: "top-0 bottom-[-1px]", last: "top-0 h-[12px]" }[tree]
  return (
    <>
      <span className={`absolute left-[9px] border-l border-dotted border-[#c4c4c4] ${vert}`} />
      <span className="absolute top-[12px] left-[9px] w-[10px] border-t border-dotted border-[#c4c4c4]" />
    </>
  )
}

function TableRow({ row }: { row: Row }) {
  return (
    <div className={`flex h-[24px] flex-none border-b border-[#292929] text-[15.500px] leading-[23px] ${row.blue ? "text-[#5c5fdc]" : "text-[#eee]"}`}>
      <div className={`relative flex w-[213px] flex-none items-center border-r border-black whitespace-nowrap ${row.tree ? "pl-[20px]" : "pl-[4px]"}`}>
        {row.tree && <TreeLines tree={row.tree} />}
        {row.icon && <span className="mr-[5px] flex items-center">{row.icon}</span>}
        {row.name}
      </div>
      <div className="flex w-[59px] flex-none items-center border-r border-[#292929] pl-[9px]">
        {row.swap && (
          <svg width="6" height="14" viewBox="0 0 6 14">
            <rect width="6" height="14" fill="#4a50d0" />
            <path d="M0 3l6-2M0 7l6-2M0 11l6-2" stroke="#c0c4ff" />
          </svg>
        )}
      </div>
      <div className="flex w-[54px] flex-none items-center border-r border-[#292929] pl-[6px]">{row.ok && <Check />}</div>
      <div className="w-[48px] flex-none border-r border-[#292929] pl-[6px]">{row.tool}</div>
      <div className="w-[39px] flex-none border-r border-[#292929] pl-[6px]">{row.num}</div>
      <div className="flex-1 pl-[4px]">{row.time}</div>
    </div>
  )
}

function NavPanel() {
  const heads = [
    { t: "名称", c: "w-[213px] pl-[7px]" },
    { t: "换刀", c: "w-[59px] pl-[7px]" },
    { t: "刀轨", c: "w-[54px] pl-[6px]" },
    { t: "刀具", c: "w-[48px] pl-[6px]" },
    { t: "刀...", c: "w-[39px] pl-[6px]" },
  ]
  const blanks = Array.from({ length: 26 }, (_, i) => i)
  return (
    <section className="flex w-[503px] flex-none flex-col">
      <div className="flex h-[54px] flex-none items-center justify-between pt-[20px] pr-[19px] pl-[5px]">
        <span className="text-[15px] text-[#eee]">工序导航器 - 程序顺序</span>
        <span className="block h-[12px] w-[13px] border border-t-[2px] border-white" />
      </div>
      <div className="ml-px flex h-[752px] w-[490px] flex-none flex-col overflow-hidden border border-[#1a1a1a]">
        <div className="flex h-[23px] flex-none bg-[#5a5a5a] text-[15px] leading-[23px] text-[#e2e2e2]">
          {heads.map((h) => (
            <div key={h.t} className={`${h.c} flex-none border-r border-[#333]`}>
              {h.t}
            </div>
          ))}
          <div className="flex-1 pl-[5px]">时间</div>
        </div>
        <div className="flex min-h-0 flex-1 flex-col overflow-hidden">
          {rows.map((r, i) => (
            <TableRow key={i} row={r} />
          ))}
          {blanks.map((i) => (
            <TableRow key={i} row={{ name: "" }} />
          ))}
        </div>
        <div className="flex h-[22px] flex-none items-center border-y border-[#eee] bg-[#f0f0f0] pb-px">
          <svg width="8" height="12" viewBox="0 0 8 12" className="ml-[5px] flex-none">
            <path d="M6.500 1L2 6l4.500 5" fill="none" stroke="#555" strokeWidth="2" />
          </svg>
          <div className="ml-[8px] h-[19px] w-[239px] bg-[#cdcdcd]" />
          <svg width="8" height="12" viewBox="0 0 8 12" className="ml-auto mr-[6px] flex-none">
            <path d="M1.500 1L6 6l-4.500 5" fill="none" stroke="#555" strokeWidth="2" />
          </svg>
        </div>
      </div>
      <div className="mt-[3px] ml-px h-[3px] w-[490px] flex-none bg-[#555]" />
      <div className="ml-px flex h-[29px] w-[490px] flex-none items-center border-b-[2px] border-[#1d1d1d] pt-[2px] pl-[11px] text-[18px] leading-none text-[#3b9cc2]">
        <svg width="7" height="14" viewBox="0 0 7 14" className="mr-[9px]">
          <path d="M0 0l7 7-7 7z" fill="#3b9cc2" />
        </svg>
        相关性
      </div>
      <div className="ml-px flex h-[27px] w-[490px] flex-none items-center border-b-[2px] border-[#1d1d1d] pl-[11px] text-[18px] leading-none text-[#3b9cc2]">
        <svg width="7" height="14" viewBox="0 0 7 14" className="mr-[9px]">
          <path d="M0 0l7 7-7 7z" fill="#3b9cc2" />
        </svg>
        细节
      </div>
    </section>
  )
}

function Tabs() {
  return (
    <div className="flex h-[49px] flex-none items-end text-[15px]">
      <div className="flex h-[28px] w-[140px] items-center text-[#e8e8e8]">
        <svg width="16" height="14" viewBox="0 0 16 14" className="ml-[6px] flex-none">
          <path d="M1 9C3 7 4 2 7 1c1 3 4 4 7 6 1 2 1 4-2 5H4C2 12 1 11 1 9z" fill="#c8c8c8" stroke="#777" />
          <ellipse cx="9" cy="9" rx="4" ry="2" fill="#888" />
        </svg>
        <span className="ml-[2px] text-[16px]">_model2.prt</span>
        <svg width="9" height="10" viewBox="0 0 9 10" className="ml-[7px] flex-none">
          <path d="M1 1h7v8H1z" fill="none" stroke="#fff" strokeWidth="1.500" />
          <path d="M4 7l4-4" stroke="#fff" strokeWidth="1.500" />
        </svg>
      </div>
      <div className="ml-[12px] flex h-[28px] w-[144px] items-center bg-[#3093ba] text-white">
        <svg width="17" height="16" viewBox="0 0 17 16" className="ml-[5px] flex-none">
          <path d="M6 1H1v3h5v3H1M6 9H1v5h5" fill="none" stroke="#fff" />
          <path d="M9 9a3.500 3.500 0 0 1 6-1M15 11a3.500 3.500 0 0 1-6 1" fill="none" stroke="#fff" strokeWidth="1.200" />
        </svg>
        <span className="ml-[5px] text-[16px]">5-1_stp.prt</span>
        <svg width="9" height="10" viewBox="0 0 9 10" className="ml-[8px] flex-none">
          <path d="M1 1h7v8H1z" fill="none" stroke="#fff" strokeWidth="1.500" />
          <path d="M4 7l4-4" stroke="#fff" strokeWidth="1.500" />
        </svg>
        <svg width="8" height="8" viewBox="0 0 8 8" className="ml-[7px] flex-none">
          <path d="M0 0l8 8M8 0L0 8" stroke="#fff" strokeWidth="1.800" />
        </svg>
      </div>
    </div>
  )
}

const edge = "#626262"

function MachineView() {
  return (
    <svg width="500" height="480" viewBox="0 0 1500 1440" className="absolute top-[165px] left-[439px]">
      <path
        d="M120 305L240 290 345 335 530 310 512 92 665 72 697 88 715 285 840 270 840 215 958 200 1125 272 1113 515 1152 985 1076 995 1100 1288 347 1382 203 1318 180 1030z"
        fill="#000"
      />
      <g fill="none" stroke={edge} strokeWidth="3">
        <path d="M120 305L288 380 408 362 240 290M345 335L940 258 1005 290 1125 272M840 215L940 258" />
        <path d="M512 92L545 105 697 88M545 105L565 305M408 362L945 295M530 310L715 285" />
        <path d="M288 380L275 620 316 1090 180 1030M316 1090L347 1382M316 1090L1076 995" />
        <path d="M408 362L398 605 455 1070M275 620L398 603M1005 290L995 525 1018 1000M995 525L1113 515" />
        <path d="M943 258L930 565 870 572M930 565L990 680 1003 1005M715 330L760 830M565 345L585 620" />
        <path d="M640 630L865 610 880 810M640 630V680M400 690L440 710 470 770 490 900M430 760L475 770 515 1070" />
        <path d="M740 625L760 830 540 870M890 620L1000 660M870 640L990 690" />
      </g>
      <g fill="none" stroke="#4d4d4d" strokeWidth="4">
        <path d="M520 680L540 870M555 925L880 900M580 965L880 940M510 930L580 1015 880 980M510 975L860 945M515 1040L870 1000M500 1035L560 1055 1000 1005" />
        <path d="M845 870c5-40 25-50 60-35M900 810c30 10 40 40 35 80M920 910L945 1000M405 700L440 705 445 735H410z" />
        <circle cx="725" cy="975" r="8" />
      </g>
      {/* wire frame blocks and datums */}
      <g fill="none" stroke="#d4d4d4" strokeWidth="3">
        <path d="M425 465L615 440 560 417 575 600M425 465L440 665 385 637 630 615 615 440M385 637L440 665 630 640" />
        <path d="M912 835L985 885 1160 835 912 835M912 835L930 1030 985 1057M985 885L985 1057" />
        <path d="M600 260L630 640M253 686L630 640" stroke="#e4e4e4" />
        <path d="M950 690L970 1050" stroke="#e4e4e4" />
        <path d="M610 630L535 597" />
      </g>
      <g fill="none" stroke="#a9a27f" strokeWidth="3">
        <path d="M1160 835L1175 1032 1120 1008 930 1030M1175 1032L1330 1016M985 1057L1175 1032M885 1015L985 1057" />
      </g>
      <g fill="#cfcfcf">
        <path d="M600 245l-9 45h18zM625 505l-11 60h22zM953 665l-10 45h20z" />
        <path d="M250 686l48-10 0 16z" />
        <circle cx="535" cy="597" r="9" />
        <circle cx="610" cy="630" r="10" />
        <circle cx="885" cy="1014" r="9" />
      </g>
      <path d="M560 648l-50 8 50 8z" fill="#a89e6e" />
      <path d="M1365 1012l-45-8 2 20z" fill="#a89e6e" />
      <path d="M522 680L540 860" stroke="#555" strokeWidth="6" />
      <path d="M533 858l12 0 -3 18z" fill="#c060c0" />
      <path d="M635 680L650 880" stroke="#3355ee" strokeWidth="7" />
      <path d="M678 660L698 920" stroke="#0a4fe0" strokeWidth="5" />
      <path d="M675 612l-12 60h26z" fill="#0a4fe0" />
      <path d="M690 770l-9 50h18z" fill="#0a3fb0" />
      <rect x="680" y="818" width="20" height="24" fill="#c48a4a" />
      <path d="M620 890L700 918 750 918 730 890 690 880z" fill="#8fd0f0" />
      <path d="M625 890L695 915" stroke="#7cc87a" strokeWidth="6" />
      <circle cx="627" cy="887" r="10" fill="#7cc87a" />
      <path d="M700 918L940 888" stroke="#e8444a" strokeWidth="5" />
      <rect x="770" y="898" width="30" height="14" fill="#d89a5a" />
      <path d="M1000 882l-65-8 4 24z" fill="#f0a0a0" />
      <path d="M700 918L760 905" stroke="#f6b0b0" strokeWidth="4" />
      <g fontFamily="'Liberation Sans', sans-serif" fontSize="40">
        <text x="584" y="240" fill="#c9c9c9">Z</text>
        <text x="634" y="498" fill="#c9c9c9">Z</text>
        <text x="500" y="603" fill="#d5d5d5">X</text>
        <text x="594" y="620" fill="#d5d5d5">X</text>
        <text x="216" y="703" fill="#d5d5d5">Y</text>
        <text x="496" y="702" fill="#a89e6e">Y</text>
        <text x="936" y="660" fill="#d5d5d5">Z</text>
        <text x="856" y="1023" fill="#d5d5d5">Y</text>
        <text x="1374" y="1023" fill="#a89e6e">X</text>
        <text x="686" y="606" fill="#1e50f0">ZM</text>
        <text x="698" y="747" fill="#1e50f0">ZC</text>
        <text x="700" y="778" fill="#c48a4a">Z</text>
        <text x="612" y="874" fill="#2f9a3a">YM</text>
        <text x="660" y="892" fill="#6faa50">YC</text>
        <text x="808" y="888" fill="#cf5a3a">XC</text>
        <text x="950" y="866" fill="#cc2a2a">XM</text>
      </g>
    </svg>
  )
}

function TriadView() {
  return (
    <svg width="150" height="140" viewBox="0 0 450 420" className="absolute top-[615px] left-[59px]">
      <g fill="none" stroke="#b8b8b8" strokeWidth="2.500">
        <path d="M58 232L178 214 214 234 94 244zM58 232L70 356 102 372 94 244M214 234L224 354 102 372" />
      </g>
      <path d="M130 232L122 130H136L144 232z" fill="#0a47d8" />
      <path d="M124 78L112 132H144z" fill="#0a47d8" />
      <path d="M220 275L300 266V258L354 266 302 288V280L220 290z" fill="#d62a2a" />
      <g fontFamily="'Liberation Sans', sans-serif" fontSize="36">
        <text x="108" y="62" fill="#3a64f0">Z</text>
        <text x="366" y="276" fill="#d86a6a">X</text>
      </g>
    </svg>
  )
}

function RightRail() {
  return (
    <aside className="flex w-[36px] flex-none flex-col items-center border-l border-[#161616] pt-[33px]">
      <S s={26}>
        <Bit x={1} y={0} w={9} h={20} />
        <path d="M12 6h14M10 10h14M10 14h8" stroke="#ddd" strokeWidth="1.300" />
        <Plus x={22} y={20} r={6} />
      </S>
      <div className="mt-[7px]">
        <S s={26}>
          <path d="M1 5l8-3 6 2v12l-8 3-6-3z" fill="#5a78e0" />
          <circle cx="5" cy="10" r="3" fill="#e6322a" />
          <path d="M18 9v16M18 14h5M18 21h5M15 7h4v4h-4zM21 12h4v4h-4zM21 19h4v4h-4z" fill="#fff" stroke="#0c12a0" />
        </S>
      </div>
      <div className="mt-[7px]">
        <S s={26}>
          <g transform="scale(.82)">
            <path d="M1 10l6-8h6v30H1z" fill="#c9c9c9" />
            <path d="M24 3l4 1 3 18H22z" fill="#c7c7c7" />
            <rect x="4" y="12" width="7" height="9" fill="#6b6b6b" />
            <rect x="17" y="0" width="4" height="9" fill="#e8821e" />
            <circle cx="24" cy="24" r="8" fill="#fff" stroke="#222" />
            <path d="M20 24l3 3 4-7" fill="none" stroke="#111" strokeWidth="1.400" />
          </g>
        </S>
      </div>
      <div className="mt-[4px]">
        <svg width="26" height="26" viewBox="0 0 26 26" className="block">
          <path d="M1 13c6-9 18-9 24 0-6 9-18 9-24 0z" fill="none" stroke="#ddd" strokeWidth="1.200" />
          <circle cx="13" cy="13" r="4.500" fill="none" stroke="#ddd" strokeWidth="1.200" />
          <path d="M2 24L24 2" stroke="#ddd" strokeWidth="1.200" />
        </svg>
      </div>
      <div className="mt-[8px]">
        <svg width="26" height="26" viewBox="0 0 26 26" className="block">
          <rect x="8" y="0" width="5" height="10" fill="#8a8a8a" stroke="#101080" />
          <rect x="7" y="8" width="6" height="6" fill="#e8c050" stroke="#b05a10" />
          <path d="M1 16h5v9H1z" fill="#6a8ed8" stroke="#101090" />
          <path d="M1 24l5-7" stroke="#e6f0ff" />
          <path d="M16 10v14M16 15h5M16 22h5M14 9h3v3h-3zM20 13h3v3h-3zM20 20h3v3h-3z" fill="#e8e04a" stroke="#0c12a0" />
        </svg>
      </div>
      <div className="mt-[6px]">
        <svg width="26" height="22" viewBox="0 0 26 22" className="block">
          <path d="M1 11c6-9 18-9 24 0-6 9-18 9-24 0z" fill="none" stroke="#ddd" strokeWidth="1.300" />
          <circle cx="13" cy="11" r="5" fill="#fff" />
        </svg>
      </div>
      <div className="mt-[10px]">
        <svg width="26" height="26" viewBox="0 0 26 26" className="block">
          <path d="M1 19L19 1l6 6L7 25z" fill="none" stroke="#ddd" strokeWidth="1.300" />
          <path d="M6 16l2 2M9 13l3 3M12 10l2 2M15 7l3 3M18 4l2 2" stroke="#ddd" />
        </svg>
      </div>
      <div className="mt-[5px]">
        <svg width="26" height="26" viewBox="0 0 26 26" className="block">
          <path d="M16 13l2 5 6 .5-4.500 4 1.500 3.500-5-3-5 3 1.500-3.500-4.500-4 6-.5z" fill="#f4dc4a" transform="translate(0 -3)" />
          <path d="M8 5l7-2 5 3-3 4-6-1z" fill="#dcb68c" />
          <path d="M20 5l3-4" stroke="#3b44cc" strokeWidth="3" />
          <path d="M1 12h8M3 16h6M1 20h7" stroke="#1a5f85" strokeWidth="1.200" />
        </svg>
      </div>
      <div className="mt-[6px]">
        <SmallRule />
      </div>
      <div className="mt-[6px]">
        <svg width="26" height="26" viewBox="0 0 26 26" className="block">
          <path d="M1 1h10v10H1z" fill="#d6dcf0" stroke="#2233aa" />
          <path d="M7 7h9v13H7z" fill="#e7eaf6" stroke="#2233aa" />
          <path d="M20 8v16M20 13h4M20 20h4M18 7h3v3h-3zM23 12h3v3h-3zM23 19h3v3h-3z" fill="#ffe" stroke="#0c12a0" />
        </svg>
      </div>
      <div className="mt-[6px] h-px w-[27px] bg-[#111]" />
      <div className="mt-auto mb-[6px] -ml-[11px]">
        <svg width="6" height="9" viewBox="0 0 6 9" className="block">
          <path d="M6 0v9L0 4.500z" fill="#fff" />
        </svg>
      </div>
    </aside>
  )
}

function Watermark() {
  return (
    <svg width="320" height="120" viewBox="0 0 960 360" className="pointer-events-none absolute top-[960px] left-[1600px] z-20">
      <path d="M220 75l107 61-3 60-64-98-2-1c-20-14-58-16-90-6z" fill="#cfe8f6" />
      <path d="M263 98l64 33v70c-10 35-50 55-95 60 45-25 72-100 31-163z" fill="#8bd0f2" />
      <path d="M327 196v65l-107 60-60-82c40 35 130 25 167-43z" fill="#73c5ec" />
      <path d="M218 321l-105-60v-5l48-20c-5 30 20 70 57 85z" fill="#79c9f0" />
      <path d="M113 261V190c20-30 50-60 47-50-10 35-10 70 0 110z" fill="#a5d7f2" />
      <path d="M113 196v-61l107-60c-40 10-90 50-107 121z" fill="#b5def4" />
      <path d="M220 145l48 27v54l-48 27-48-27v-54z" fill="#e6e7e9" />
      <path d="M220 145l47 26-47 27-47-27z" fill="#bfe3f5" />
      <path d="M173 175l45 26v50l-45-26z" fill="#9fd6f3" />
      <path d="M222 201l45-26v50l-45 26z" fill="#79c6ec" />
      <text x="350" y="224" fill="#fff" fillOpacity=".45" fontSize="132" fontWeight="700" fontFamily="'Liberation Sans','Noto Sans CJK SC',sans-serif">
        3D世界网
      </text>
      <text x="356" y="280" fill="#fff" fillOpacity=".45" fontSize="36" fontWeight="700" letterSpacing="11" fontFamily="'Liberation Sans',sans-serif">
        WWW.3DSJW.COM
      </text>
    </svg>
  )
}

export default function App() {
  return (
    <div className="relative flex h-[1080px] w-[1920px] flex-col overflow-hidden bg-[#333] font-['Noto_Sans','Noto_Sans_CJK_SC',sans-serif]">
      {/* load progress strip at the very top */}
      <div className="absolute top-0 left-[809px] z-20 flex h-px">
        <div className="w-[60px] bg-[#00c853]" />
        <div className="w-[240px] bg-white" />
      </div>
      <TitleBar />
      <Ribbon />
      <div className="h-px flex-none bg-[#141414]" />
      <Toolbar />
      <div className="h-[3px] flex-none bg-[#1f1f1f]" />
      <main className="flex min-h-0 flex-1">
        <LeftRail />
        <NavPanel />
        <div className="flex min-w-0 flex-1 flex-col">
          <Tabs />
          <div className="relative flex-1 border-t-[2px] border-[#3093ba] bg-gradient-to-b from-[#b3b4b6] to-[#e7e8ea]">
            <MachineView />
            <TriadView />
          </div>
        </div>
        <RightRail />
      </main>
      <div className="flex h-[3px] flex-none bg-[#b9d0da]">
        <div className="ml-[60px] w-[430px] bg-white" />
      </div>
      <Watermark />
    </div>
  )
}
